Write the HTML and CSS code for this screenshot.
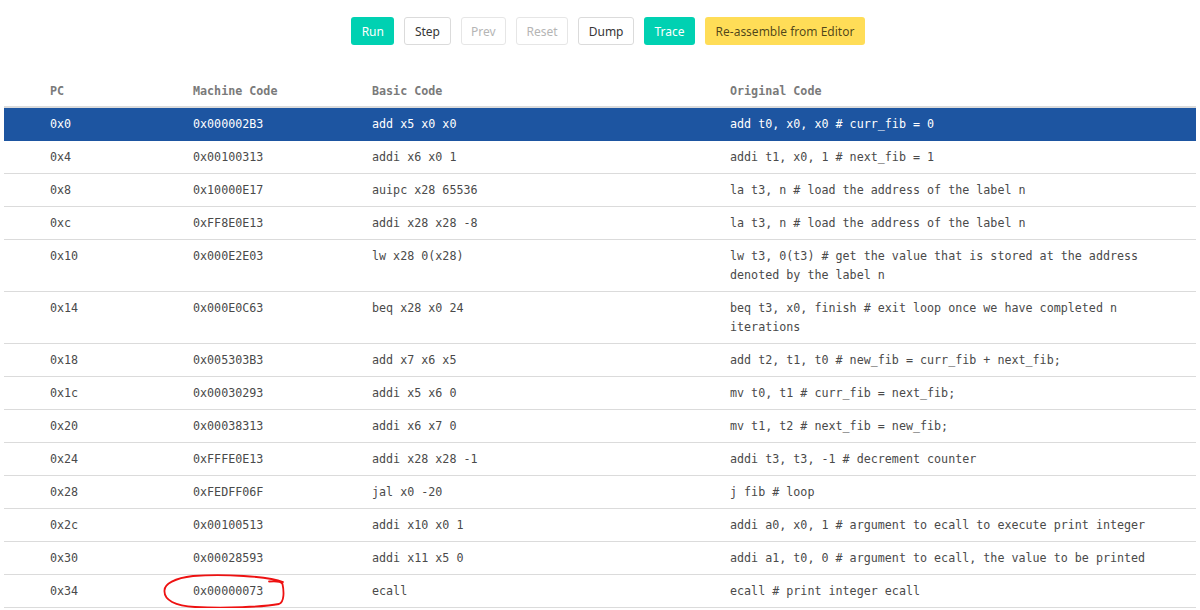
FILE: index.html
```html
<!DOCTYPE html>
<html>
<head>
<meta charset="utf-8">
<link rel="stylesheet" href="styles.css">
</head>
<body>
<div class="toolbar">
  <button class="btn btn-primary">Run</button>
  <button class="btn">Step</button>
  <button class="btn" disabled>Prev</button>
  <button class="btn" disabled>Reset</button>
  <button class="btn">Dump</button>
  <button class="btn btn-primary">Trace</button>
  <button class="btn btn-warning">Re-assemble from Editor</button>
</div>
<table class="code-table">
  <colgroup>
    <col class="c-pc"><col class="c-mc"><col class="c-bc"><col class="c-oc">
  </colgroup>
  <thead>
    <tr><th>PC</th><th>Machine Code</th><th>Basic Code</th><th>Original Code</th></tr>
  </thead>
  <tbody>
    <tr class="current"><td>0x0</td><td>0x000002B3</td><td>add x5 x0 x0</td><td>add t0, x0, x0 # curr_fib = 0</td></tr>
    <tr><td>0x4</td><td>0x00100313</td><td>addi x6 x0 1</td><td>addi t1, x0, 1 # next_fib = 1</td></tr>
    <tr><td>0x8</td><td>0x10000E17</td><td>auipc x28 65536</td><td>la t3, n # load the address of the label n</td></tr>
    <tr><td>0xc</td><td>0xFF8E0E13</td><td>addi x28 x28 -8</td><td>la t3, n # load the address of the label n</td></tr>
    <tr><td>0x10</td><td>0x000E2E03</td><td>lw x28 0(x28)</td><td>lw t3, 0(t3) # get the value that is stored at the address denoted by the label n</td></tr>
    <tr><td>0x14</td><td>0x000E0C63</td><td>beq x28 x0 24</td><td>beq t3, x0, finish # exit loop once we have completed n iterations</td></tr>
    <tr><td>0x18</td><td>0x005303B3</td><td>add x7 x6 x5</td><td>add t2, t1, t0 # new_fib = curr_fib + next_fib;</td></tr>
    <tr><td>0x1c</td><td>0x00030293</td><td>addi x5 x6 0</td><td>mv t0, t1 # curr_fib = next_fib;</td></tr>
    <tr><td>0x20</td><td>0x00038313</td><td>addi x6 x7 0</td><td>mv t1, t2 # next_fib = new_fib;</td></tr>
    <tr><td>0x24</td><td>0xFFFE0E13</td><td>addi x28 x28 -1</td><td>addi t3, t3, -1 # decrement counter</td></tr>
    <tr><td>0x28</td><td>0xFEDFF06F</td><td>jal x0 -20</td><td>j fib # loop</td></tr>
    <tr><td>0x2c</td><td>0x00100513</td><td>addi x10 x0 1</td><td>addi a0, x0, 1 # argument to ecall to execute print integer</td></tr>
    <tr><td>0x30</td><td>0x00028593</td><td>addi x11 x5 0</td><td>addi a1, t0, 0 # argument to ecall, the value to be printed</td></tr>
    <tr><td>0x34</td><td class="marked">0x00000073<svg class="scribble" width="125" height="38" viewBox="0 0 125 38"><path d="M 120 9 C 105 3, 60 1, 30 3 C 12 5, 1 11, 1.5 18 C 1 27, 12 33, 32 34 C 62 35.5, 100 34, 116 31 C 121.5 29, 121 18, 119.5 11 C 118 8, 112 8, 106 8.5" fill="none" stroke="#ee1111" stroke-width="1.8" stroke-linecap="round"/></svg></td><td>ecall</td><td>ecall # print integer ecall</td></tr>
  </tbody>
</table>
</body>
</html>
```

FILE: styles.css
```css
html, body {
  margin: 0;
  padding: 0;
  background: #ffffff;
}

body {
  font-family: "Noto Sans", "Open Sans", sans-serif;
  overflow: hidden;
}

.toolbar {
  display: flex;
  justify-content: center;
  gap: 10px;
  padding: 17px 0 0 16px;
  height: 28px;
}

.btn {
  height: 28px;
  box-sizing: border-box;
  padding: 1px 9.5px 0 9.5px;
  border: 1px solid #dbdbdb;
  border-radius: 3px;
  background: #ffffff;
  color: #363636;
  font-family: "Noto Sans", "Open Sans", sans-serif;
  font-size: 12px;
  line-height: 25px;
  cursor: pointer;
}

.btn:disabled {
  color: #b5b5b5;
  border-color: #e6e6e6;
  cursor: default;
}

.btn-primary {
  background: #00d1b2;
  border-color: transparent;
  color: #ffffff;
}

.btn-warning {
  background: #ffdd57;
  border-color: transparent;
  color: rgba(0, 0, 0, 0.7);
}

.code-table {
  margin: 28px 4px 0 4px;
  width: 1192px;
  table-layout: fixed;
  border-collapse: collapse;
  font-family: "DejaVu Sans Mono", "Liberation Mono", monospace;
  font-size: 11.7px;
  line-height: 19px;
  color: #4a4a4a;
}

.c-pc { width: 177px; }
.c-mc { width: 179px; }
.c-bc { width: 358px; }
.c-oc { width: 478px; }

.code-table th {
  text-align: left;
  font-weight: bold;
  color: #7a7a7a;
  padding: 9px 12px 5px 12px;
  border-bottom: 2px solid #dbdbdb;
}

.code-table td {
  padding: 7px 12px 6px 12px;
  border-bottom: 1px solid #dbdbdb;
  vertical-align: top;
  white-space: pre-wrap;
}

.code-table th:first-child,
.code-table td:first-child {
  padding-left: 46px;
}

.code-table tr.current td {
  background: #1d55a1;
  color: #ffffff;
  border-bottom-color: #1d55a1;
}

.marked {
  position: relative;
}

.scribble {
  position: absolute;
  left: -18px;
  top: -2px;
  overflow: visible;
}
```
